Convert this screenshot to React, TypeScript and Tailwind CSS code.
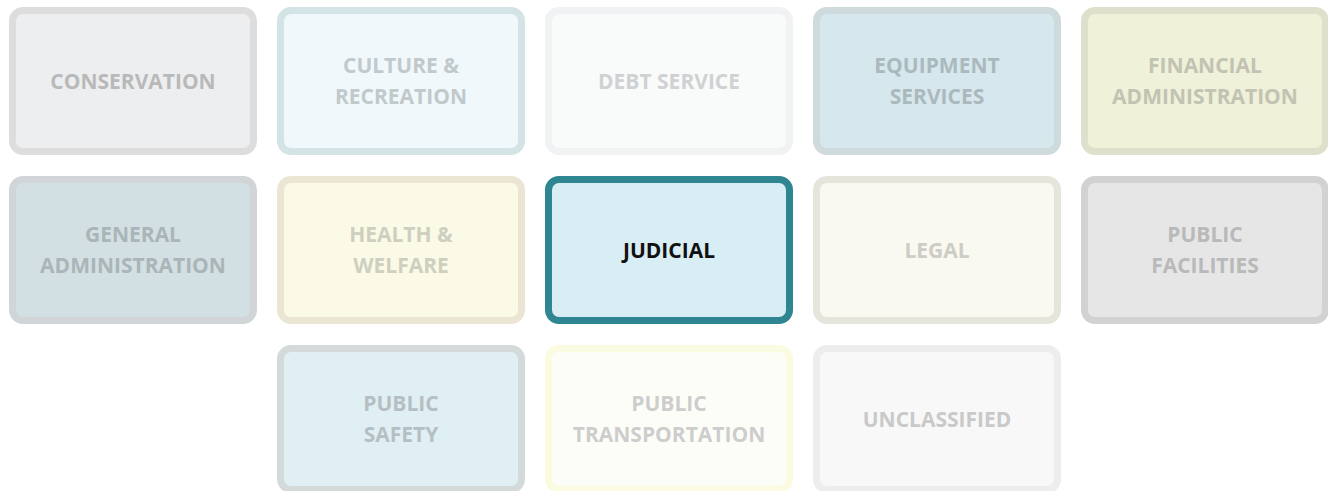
type Tile = {
  lines: string[];
  border: string;
  fill: string;
  text: string;
  start?: string;
};

const tiles: Tile[] = [
  { lines: ["CONSERVATION"], border: "border-[#dddddd]", fill: "bg-[#eceef0]", text: "text-[#b9b9b9]" },
  { lines: ["CULTURE &", "RECREATION"], border: "border-[#d4e3e6]", fill: "bg-[#f0f8fb]", text: "text-[#c1c9cb]" },
  { lines: ["DEBT SERVICE"], border: "border-[#f0f2f3]", fill: "bg-[#f9fbfb]", text: "text-[#cfd1d2]" },
  { lines: ["EQUIPMENT", "SERVICES"], border: "border-[#cfdadd]", fill: "bg-[#d6e7ed]", text: "text-[#abb9bd]" },
  { lines: ["FINANCIAL", "ADMINISTRATION"], border: "border-[#dfe0cc]", fill: "bg-[#eff1d9]", text: "text-[#c2c3b3]" },
  { lines: ["GENERAL", "ADMINISTRATION"], border: "border-[#d1d5d7]", fill: "bg-[#d3e0e3]", text: "text-[#a9b5b7]" },
  { lines: ["HEALTH &", "WELFARE"], border: "border-[#ebe6d4]", fill: "bg-[#fafae7]", text: "text-[#cfcfc0]" },
  { lines: ["JUDICIAL"], border: "border-[#2f8591]", fill: "bg-[#d9eef4]", text: "text-[#111111]" },
  { lines: ["LEGAL"], border: "border-[#e5e5dc]", fill: "bg-[#f9f9f1]", text: "text-[#cdcdc5]" },
  { lines: ["PUBLIC", "FACILITIES"], border: "border-[#d2d2d2]", fill: "bg-[#e6e6e6]", text: "text-[#b9b9b9]" },
  { lines: ["PUBLIC", "SAFETY"], border: "border-[#d4d9da]", fill: "bg-[#e0eff4]", text: "text-[#b5bfc3]", start: "col-start-2" },
  { lines: ["PUBLIC", "TRANSPORTATION"], border: "border-[#fbfbe1]", fill: "bg-[#fdfdf8]", text: "text-[#cdcdcd]" },
  { lines: ["UNCLASSIFIED"], border: "border-[#ededed]", fill: "bg-[#f8f8f8]", text: "text-[#c9c9c9]" },
];

export default function App() {
  return (
    <div className="h-[491px] w-[1328px] overflow-hidden bg-white [font-family:'Open_Sans',sans-serif]">
      <div className="grid grid-cols-[repeat(5,248px)] gap-x-[20px] gap-y-[21px] pl-[9px] pt-[7px]">
        {tiles.map((t) => (
          <div
            key={t.lines.join(" ")}
            className={`flex h-[148px] items-center justify-center rounded-[14px] border-[7px] ${t.border} ${t.fill} ${t.start ?? ""}`}
          >
            <p className={`text-center text-[21px] font-bold leading-[31px] ${t.text}`}>
              {t.lines.map((l) => (
                <span key={l} className="block">
                  {l}
                </span>
              ))}
            </p>
          </div>
        ))}
      </div>
    </div>
  );
}
